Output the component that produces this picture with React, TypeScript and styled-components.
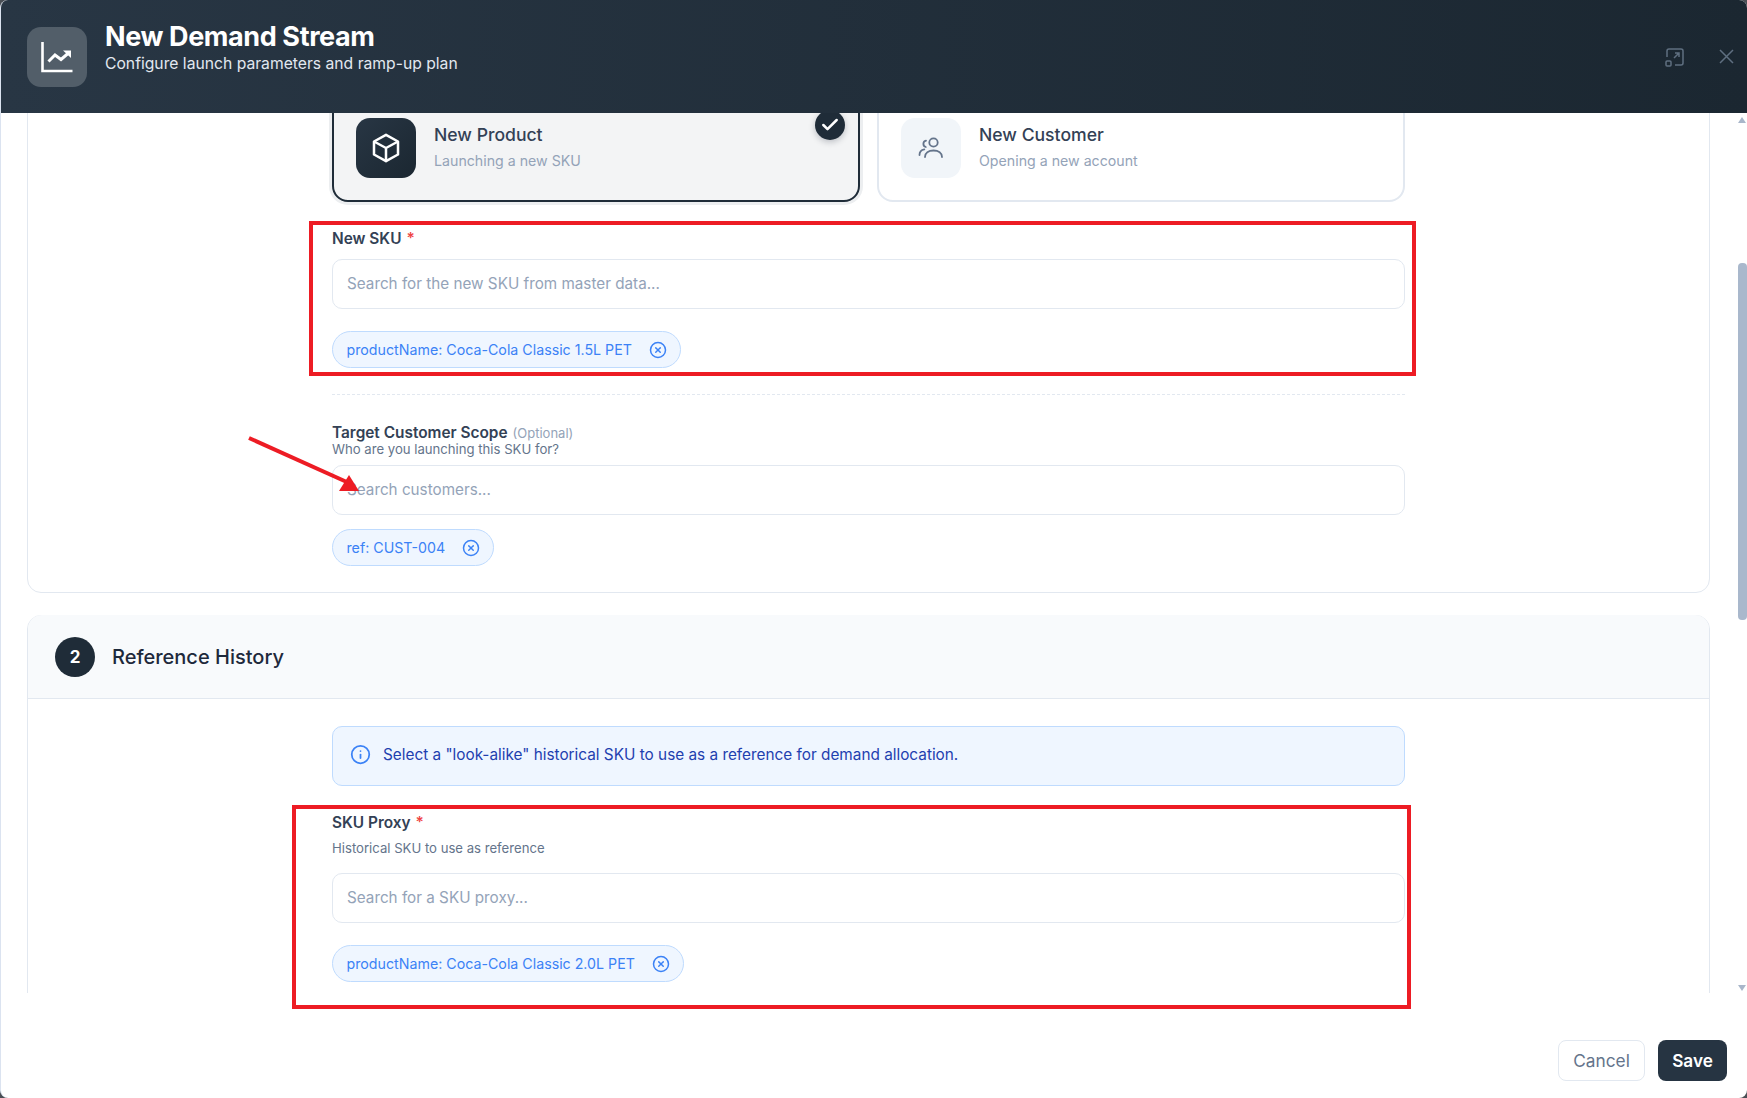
import styled, { createGlobalStyle } from "styled-components";
import { Check, CircleX, Info } from "lucide-react";

const GlobalStyle = createGlobalStyle`
  html, body {
    margin: 0;
    height: 100%;
    overflow: hidden;
    background: #4a4f55;
    font-family: Inter, "Noto Sans", "Liberation Sans", sans-serif;
  }
  * {
    box-sizing: border-box;
  }
`;

const ChartIcon = () => (
  <svg width="36" height="36" viewBox="0 0 36 36" fill="none" stroke="#fff" strokeWidth="2.6">
    <path d="M3.5 3v29h30" />
    <path d="M9.5 22.5l6.5-6.5 6 4.5 7-6" strokeWidth="3" />
    <path d="M24 11.5h8v7.5z" fill="#fff" stroke="none" />
  </svg>
);

const ExpandIcon = () => (
  <svg width="24" height="24" viewBox="0 0 24 24" fill="none" stroke="#5f6f80" strokeWidth="1.5">
    <path d="M3 17a1 1 0 0 1 1-1h3a1 1 0 0 1 1 1v3a1 1 0 0 1-1 1H4a1 1 0 0 1-1-1z" />
    <path d="M4 12V6a2 2 0 0 1 2-2h12a2 2 0 0 1 2 2v12a2 2 0 0 1-2 2h-6" />
    <path d="M12 8h4v4M16 8l-5 5" />
  </svg>
);

const CloseIcon = () => (
  <svg width="15" height="15" viewBox="0 0 15 15" fill="none" stroke="#5f6f80" strokeWidth="1.5">
    <path d="M1 1l13 13M14 1L1 14" />
  </svg>
);

const CubeIcon = () => (
  <svg width="32" height="32" viewBox="0 0 28 28" fill="none" stroke="#fff" strokeWidth="2.2" strokeLinejoin="round">
    <path d="M14 2.5l10.5 5.8v11.4L14 25.5 3.5 19.7V8.3z" />
    <path d="M3.5 8.3L14 14l10.5-5.7M14 14v11.5" />
  </svg>
);

const PeopleIcon = () => (
  <svg width="28" height="28" viewBox="0 0 28 28" fill="none" stroke="#64748b" strokeWidth="1.8" strokeLinecap="round">
    <circle cx="16.5" cy="8.5" r="4.2" />
    <path d="M8 23c0-4 3.5-6.5 8.5-6.5S25 19 25 23" />
    <path d="M9 6.6a3.3 3.3 0 0 0-.2 6.4" />
    <path d="M2.5 21c0-3 1.8-5 4.8-5.6" />
  </svg>
);

const Modal = styled.div`
  position: relative;
  width: 100%;
  height: 1098px;
  display: flex;
  flex-direction: column;
  background: #fff;
  border-left: 1px solid #dbe3f0;
  border-radius: 8px;
  overflow: hidden;
`;

const Header = styled.header`
  height: 113px;
  flex: none;
  display: flex;
  align-items: center;
  gap: 18px;
  padding: 0 13px 0 26px;
  background: linear-gradient(90deg, #283644 0%, #1b2731 100%);
  position: relative;
  z-index: 1;
`;

const HeaderIcon = styled.div`
  width: 60px;
  height: 60px;
  display: flex;
  align-items: center;
  justify-content: center;
  border-radius: 14px;
  background: #525e69;
`;

const HeaderText = styled.div`
  align-self: flex-start;
  margin-top: 21px;
  display: flex;
  flex-direction: column;
  gap: 1px;
`;

const Title = styled.h1`
  margin: 0;
  font-size: 27px;
  line-height: 32px;
  font-weight: 700;
  letter-spacing: -0.4px;
  color: #fff;
`;

const Subtitle = styled.p`
  margin: 0;
  font-size: 15.7px;
  line-height: 20px;
  font-weight: 400;
  color: #e2e8f0;
`;

const HeaderActions = styled.div`
  margin-left: auto;
  display: flex;
  align-items: center;
  gap: 32px;
`;

const IconButton = styled.button`
  padding: 0;
  border: none;
  background: none;
  display: flex;
  width: ${(p: { $w: number }) => p.$w}px;
`;

const Body = styled.div`
  height: 880px;
  flex: none;
  display: flex;
  overflow: hidden;
`;

const ScrollArea = styled.div`
  flex: 1;
  min-width: 0;
  padding: 0 28px 0 26px;
`;

const Section = styled.section`
  border: 1px solid #e2e8f0;
  border-radius: 14px;
  background: #fff;
  margin-bottom: 22px;
  &:first-child {
    margin-top: -40px;
    padding-top: 20px;
  }
`;

const SectionHeader = styled.div`
  height: 84px;
  display: flex;
  align-items: center;
  gap: 17px;
  padding: 0 27px;
  background: #f8fafc;
  border-bottom: 1px solid #e2e8f0;
  border-radius: 14px 14px 0 0;
  margin-top: -1px;
`;

const StepBadge = styled.div`
  width: 40px;
  height: 40px;
  border-radius: 50%;
  display: flex;
  align-items: center;
  justify-content: center;
  background: #1f2c38;
  color: #fff;
  font-size: 17px;
  font-weight: 700;
`;

const SectionTitle = styled.h2`
  margin: 0;
  font-size: 20px;
  font-weight: 500;
  color: #1e293b;
`;

const Form = styled.div`
  width: 1073px;
  margin-left: 304px;
  padding-bottom: 26px;
  padding-top: ${(p: { $top?: number }) => p.$top ?? 0}px;
`;

const OptionRow = styled.div`
  display: grid;
  grid-template-columns: 528px 528px;
  gap: 17px;
`;

const OptionCard = styled.div<{ $selected?: boolean }>`
  position: relative;
  height: 108px;
  display: flex;
  align-items: center;
  gap: 18px;
  padding: 0 22px;
  border-radius: 16px;
  border: 2px solid ${(p) => (p.$selected ? "#1f2c38" : "#e2e8f0")};
  background: ${(p) => (p.$selected ? "#f3f4f5" : "#fff")};
  box-shadow: ${(p) => (p.$selected ? "0 0 0 3px #eceef0" : "none")};
`;

const OptionIcon = styled.div<{ $selected?: boolean }>`
  width: 60px;
  height: 60px;
  flex: none;
  display: flex;
  align-items: center;
  justify-content: center;
  border-radius: 14px;
  background: ${(p) => (p.$selected ? "linear-gradient(135deg, #283644, #1b2731)" : "#f1f5f9")};
`;

const OptionText = styled.div`
  display: flex;
  flex-direction: column;
  gap: 5px;
  margin-top: -2px;
`;

const OptionTitle = styled.div`
  font-size: 17.6px;
  line-height: 21px;
  font-weight: 500;
  color: #334155;
`;

const OptionSub = styled.div`
  font-size: 14.2px;
  line-height: 21px;
  color: #94a3b8;
`;

const CheckBadge = styled.div`
  position: absolute;
  top: 14px;
  right: 13px;
  width: 30px;
  height: 30px;
  border-radius: 50%;
  display: flex;
  align-items: center;
  justify-content: center;
  background: #1f2c38;
  box-shadow: 0 2px 6px rgba(15, 23, 42, 0.25);
`;

const Label = styled.div<{ $top: number }>`
  margin-top: ${(p) => p.$top}px;
  font-size: 15.4px;
  line-height: 20px;
  font-weight: 600;
  color: #334155;
`;

const Required = styled.span`
  color: #ef4444;
  margin-left: 5px;
`;

const Optional = styled.span`
  margin-left: 5px;
  font-size: 13px;
  font-weight: 400;
  color: #94a3b8;
`;

const Hint = styled.div<{ $top: number }>`
  margin-top: ${(p) => p.$top}px;
  font-size: 13.15px;
  line-height: 16px;
  color: #64748b;
`;

const Input = styled.input<{ $top: number }>`
  display: block;
  width: 100%;
  height: 50px;
  margin-top: ${(p) => p.$top}px;
  padding: 0 14px 2px;
  border: 1px solid #e2e8f0;
  border-radius: 10px;
  background: #fff;
  font-family: inherit;
  font-size: 15.25px;
  color: #334155;
  outline: none;
  &::placeholder {
    color: #94a3b8;
  }
`;

const Tag = styled.div<{ $top: number }>`
  display: inline-flex;
  align-items: center;
  gap: 17px;
  height: 37px;
  margin-top: ${(p) => p.$top}px;
  padding: 0 13px 0 13.5px;
  border: 1px solid #bfdbfe;
  border-radius: 19px;
  background: #eff6ff;
  font-size: 14.22px;
  color: #3b82f6;
  vertical-align: top;
`;

const Divider = styled.div`
  margin-top: 26px;
  border-top: 1px dashed #e2e8f0;
`;

const InfoBox = styled.div`
  height: 60px;
  display: flex;
  align-items: center;
  gap: 12px;
  padding: 0 17px 3px;
  border: 1px solid #bfdbfe;
  border-radius: 10px;
  background: #eff6ff;
  font-size: 15.33px;
  color: #1e40af;
`;

const ScrollTrack = styled.div`
  width: 9px;
  flex: none;
  display: flex;
  flex-direction: column;
  padding: 4px 0 2px;
`;

const ScrollArrow = styled.div<{ $down?: boolean }>`
  width: 0;
  height: 0;
  border-left: 4.5px solid transparent;
  border-right: 4.5px solid transparent;
  ${(p) => (p.$down ? "border-top: 6px solid #a9b6ca;" : "border-bottom: 6px solid #a9b6ca;")}
  ${(p) => (p.$down ? "margin-top: auto;" : "")}
`;

const ScrollThumb = styled.div`
  height: 357px;
  margin-top: 140px;
  border-radius: 4px;
  background: #a9b8cc;
`;

const Footer = styled.footer`
  flex: 1;
  display: flex;
  justify-content: flex-end;
  align-items: flex-start;
  gap: 13px;
  padding: 47px 20px 0 0;
`;

const CancelButton = styled.button`
  width: 87px;
  height: 41px;
  border: 1px solid #e2e8f0;
  border-radius: 8px;
  background: #fff;
  font-family: inherit;
  font-size: 17.3px;
  font-weight: 400;
  color: #64748b;
`;

const SaveButton = styled.button`
  width: 69px;
  height: 41px;
  border: none;
  border-radius: 8px;
  background: #263442;
  font-family: inherit;
  font-size: 17.2px;
  font-weight: 600;
  color: #fff;
`;

const RedBox = styled.div<{ $x: number; $y: number; $w: number; $h: number }>`
  position: absolute;
  left: ${(p) => p.$x}px;
  top: ${(p) => p.$y}px;
  width: ${(p) => p.$w}px;
  height: ${(p) => p.$h}px;
  border: 4px solid #ed1c24;
  pointer-events: none;
  z-index: 2;
`;

const RedArrow = styled.svg`
  position: absolute;
  left: 240px;
  top: 430px;
  z-index: 2;
`;

const App = () => {
  return (
    <>
      <GlobalStyle />
      <Modal>
        <Header>
          <HeaderIcon>
            <ChartIcon />
          </HeaderIcon>
          <HeaderText>
            <Title>New Demand Stream</Title>
            <Subtitle>Configure launch parameters and ramp-up plan</Subtitle>
          </HeaderText>
          <HeaderActions>
            <IconButton $w={24}>
              <ExpandIcon />
            </IconButton>
            <IconButton $w={15}>
              <CloseIcon />
            </IconButton>
          </HeaderActions>
        </Header>

        <Body>
          <ScrollArea>
            <Section>
              <Form>
                <OptionRow>
                  <OptionCard $selected>
                    <OptionIcon $selected>
                      <CubeIcon />
                    </OptionIcon>
                    <OptionText>
                      <OptionTitle>New Product</OptionTitle>
                      <OptionSub>Launching a new SKU</OptionSub>
                    </OptionText>
                    <CheckBadge>
                      <Check size={20} color="#fff" strokeWidth={3} />
                    </CheckBadge>
                  </OptionCard>
                  <OptionCard>
                    <OptionIcon>
                      <PeopleIcon />
                    </OptionIcon>
                    <OptionText>
                      <OptionTitle>New Customer</OptionTitle>
                      <OptionSub>Opening a new account</OptionSub>
                    </OptionText>
                  </OptionCard>
                </OptionRow>

                <Label $top={27}>
                  New SKU<Required>*</Required>
                </Label>
                <Input $top={10} placeholder="Search for the new SKU from master data..." />
                <Tag $top={22}>
                  productName: Coca-Cola Classic 1.5L PET
                  <CircleX size={18} />
                </Tag>
                <Divider />

                <Label $top={28}>
                  Target Customer Scope<Optional>(Optional)</Optional>
                </Label>
                <Hint $top={-2}>Who are you launching this SKU for?</Hint>
                <Input $top={8} placeholder="Search customers..." />
                <Tag $top={14}>
                  ref: CUST-004
                  <CircleX size={18} />
                </Tag>
              </Form>
            </Section>

            <Section>
              <SectionHeader>
                <StepBadge>2</StepBadge>
                <SectionTitle>Reference History</SectionTitle>
              </SectionHeader>
              <Form $top={27}>
                <InfoBox>
                  <Info size={21} color="#3b82f6" />
                  {'Select a "look-alike" historical SKU to use as a reference for demand allocation.'}
                </InfoBox>
                <Label $top={27}>
                  SKU Proxy<Required>*</Required>
                </Label>
                <Hint $top={7}>Historical SKU to use as reference</Hint>
                <Input $top={17} placeholder="Search for a SKU proxy..." />
                <Tag $top={22}>
                  productName: Coca-Cola Classic 2.0L PET
                  <CircleX size={18} />
                </Tag>
              </Form>
            </Section>
          </ScrollArea>
          <ScrollTrack>
            <ScrollArrow />
            <ScrollThumb />
            <ScrollArrow $down />
          </ScrollTrack>
        </Body>

        <Footer>
          <CancelButton>Cancel</CancelButton>
          <SaveButton>Save</SaveButton>
        </Footer>

        <RedBox $x={308} $y={221} $w={1107} $h={155} />
        <RedBox $x={291} $y={805} $w={1119} $h={204} />
        <RedArrow width="130" height="70" viewBox="0 0 130 70">
          <path d="M8 8L108 53" stroke="#ed1c24" strokeWidth="4" />
          <path d="M118 61L98 61L108 45z" fill="#ed1c24" />
        </RedArrow>
      </Modal>
    </>
  );
};

export default App;
